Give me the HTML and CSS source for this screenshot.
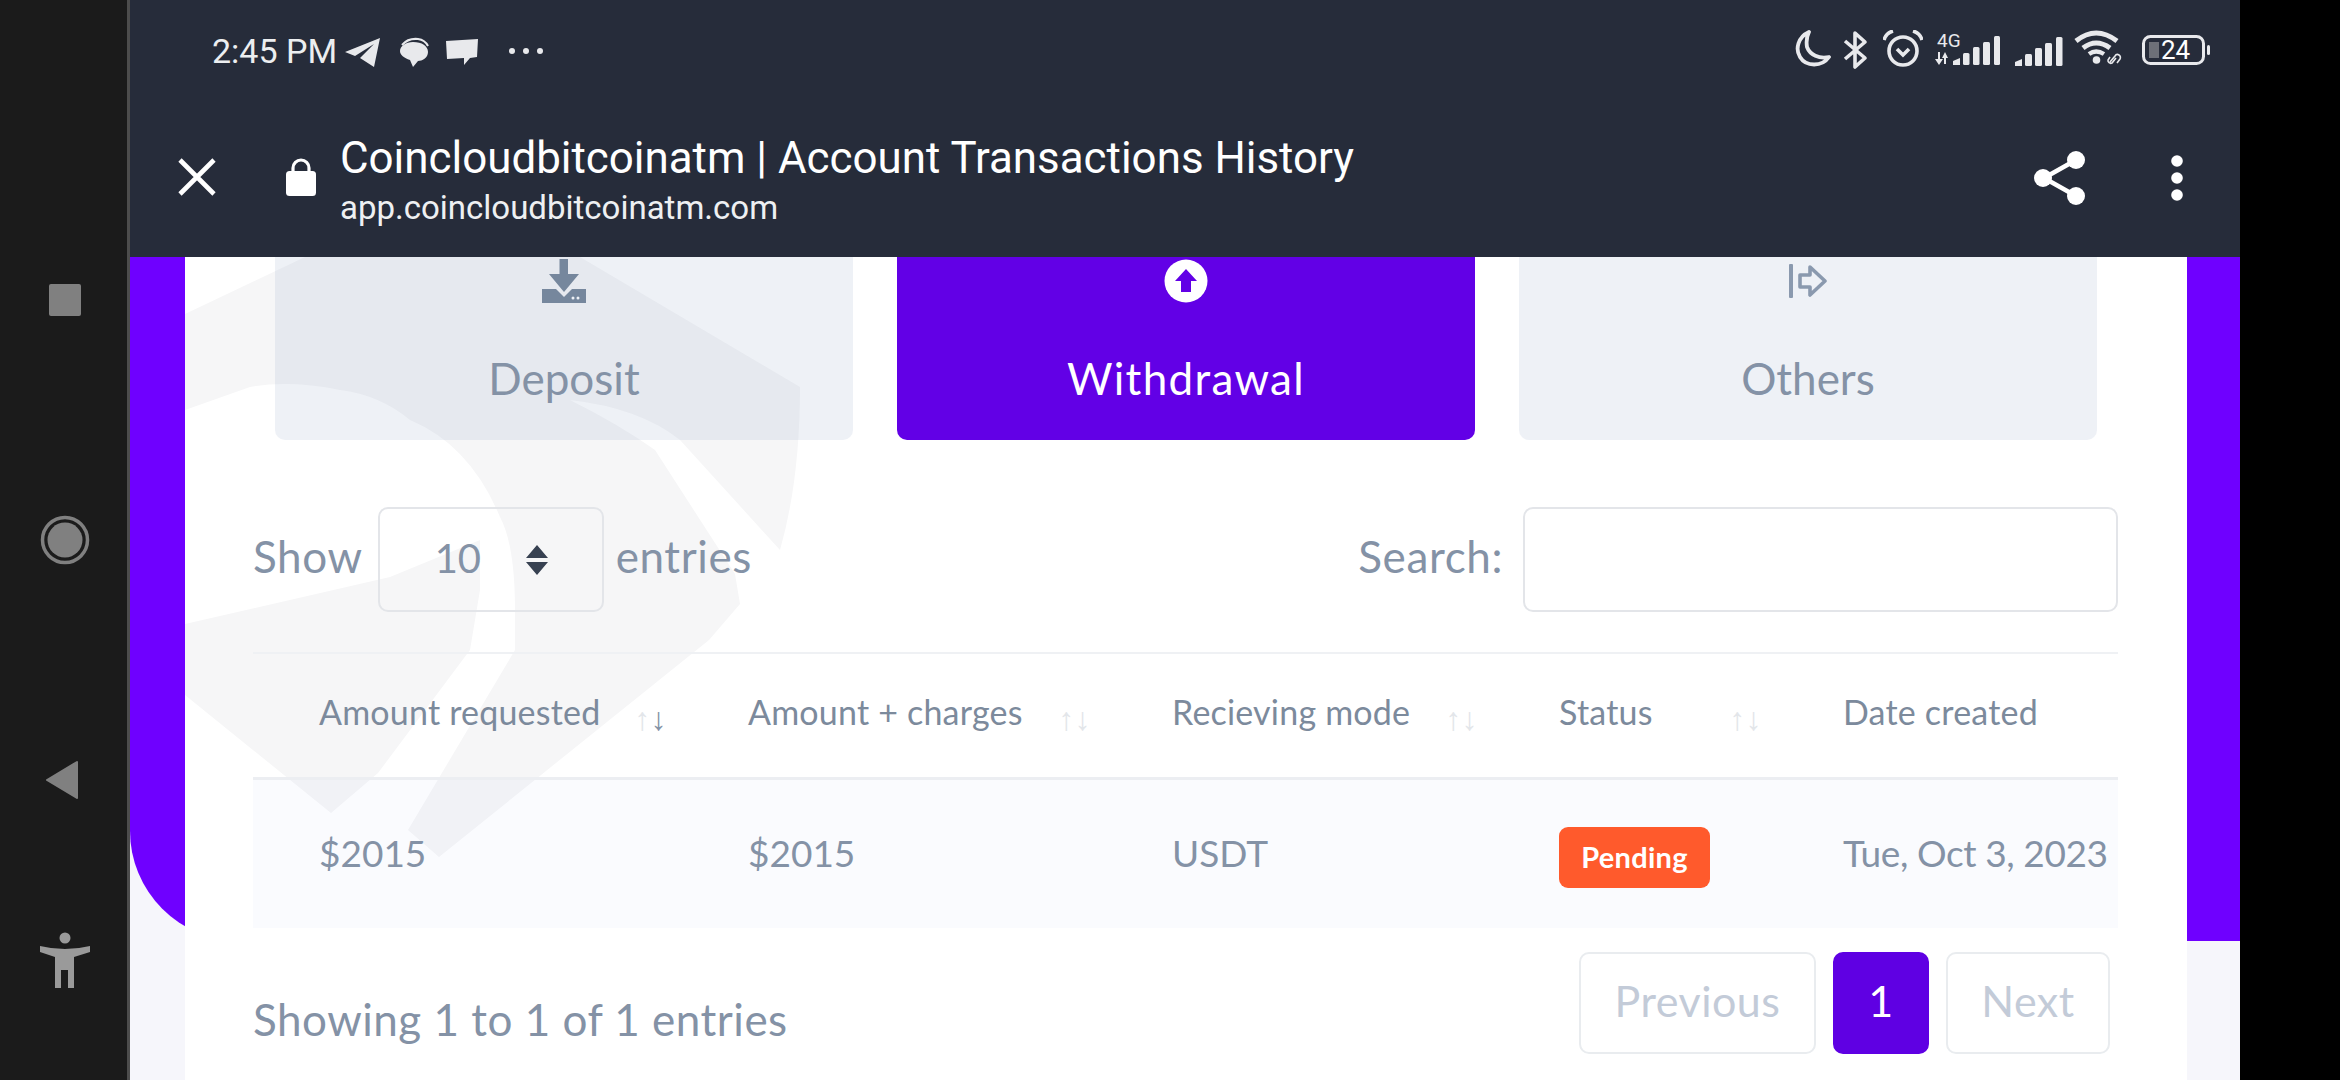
FILE: index.html
```html
<!DOCTYPE html>
<html lang="en">
<head>
  <meta charset="UTF-8">
  <title>Coincloudbitcoinatm | Account Transactions History</title>
  <link rel="stylesheet" href="styles.css">
</head>
<body>
  <!-- side navigation of the phone -->
  <nav class="sys-nav">
    <div class="nav-stop"></div>
    <svg width="50" height="50" viewBox="0 0 50 50"><circle cx="25" cy="25" r="22.5" fill="none" stroke="#808080" stroke-width="3.5"/><circle cx="25" cy="25" r="17.5" fill="#808080"/></svg>
    <svg class="nav-back" width="34" height="38" viewBox="0 0 34 38"><path d="M32 1 L2 19 L32 37 Z" fill="#808080" stroke="#808080" stroke-width="2" stroke-linejoin="round"/></svg>
    <svg width="50" height="56" viewBox="0 0 50 56"><circle cx="25" cy="6" r="5.5" fill="#9a9a9a"/><path d="M0 14 Q12 17 25 17 Q38 17 50 14 L50 20 L34 25 L34 56 L28 56 L28 38 L21 38 L21 56 L15 56 L15 25 L0 20 Z" fill="#9a9a9a"/></svg>
  </nav>

  <div class="screen">
    <header class="app-bar">
      <div class="status-bar">
        <span class="clock">2:45 PM</span>
        <svg class="st-plane" width="36" height="30" viewBox="0 0 36 30"><path d="M35 1 L0 15 L10 19 L29 7 L15 21 L29 30 Z" fill="#e8e9ec"/></svg>
        <svg class="st-chat" width="32" height="30" viewBox="0 0 32 30"><path d="M4 8 Q10 1 20 2 Q27 3 30 9" fill="none" stroke="#e8e9ec" stroke-width="2"/><path d="M15 5 C24 5 30 9 30 15 C30 21 24 24 20 24 L15 30 L12 23 C6 21 2 18 2 14 C2 9 8 5 15 5 Z" fill="#e8e9ec"/></svg>
        <svg class="st-msg" width="32" height="26" viewBox="0 0 32 26"><path d="M0 2 L32 0 L31 18 L24 19 L18 26 L18 19 L1 20 Z" fill="#e8e9ec"/></svg>
        <svg class="st-more" width="36" height="8" viewBox="0 0 36 8"><circle cx="4" cy="4" r="3" fill="#e8e9ec"/><circle cx="18" cy="4" r="3" fill="#e8e9ec"/><circle cx="32" cy="4" r="3" fill="#e8e9ec"/></svg>

        <div class="status-right">
          <svg class="st-moon" width="37" height="37" viewBox="0 0 37 37"><path d="M15 2 C4 7 1 19 6 27 C12 37 28 37 35 27 C25 29 16 25 13 17 C12 11 13 6 15 2 Z" fill="none" stroke="#e8e9ec" stroke-width="3.8" stroke-linejoin="round"/></svg>
          <svg width="26" height="40" viewBox="0 0 26 40"><path d="M3 11 L23 28 L13 37 L13 3 L23 12 L3 29" fill="none" stroke="#e8e9ec" stroke-width="3.6" stroke-linejoin="round"/></svg>
          <svg class="st-alarm" width="40" height="38" viewBox="0 0 40 38"><circle cx="20" cy="21" r="14" fill="none" stroke="#e8e9ec" stroke-width="3.6"/><path d="M14 19 L20 25 L26 19" fill="none" stroke="#e8e9ec" stroke-width="3.6"/><path d="M1 10 Q3 3 10 1 M39 10 Q37 3 30 1" fill="none" stroke="#e8e9ec" stroke-width="3.6"/></svg>
          <svg class="st-sig" width="68" height="36" viewBox="0 -4 68 36"><text class="st-4g" x="3" y="13">4G</text><path d="M1 25 L4 25 L4 18 L6 18 L6 25 L9 25 L5 31 Z M8 24 L11 18 L14 24 L12 24 L12 30 L10 30 L10 24 Z" fill="#e8e9ec"/><path d="M19 31 L19 27 L26 24 L26 31 Z" fill="#e8e9ec"/><rect x="29" y="19" width="6.5" height="12" rx="1.5" fill="#e8e9ec"/><rect x="39" y="13" width="6.5" height="18" rx="1.5" fill="#e8e9ec"/><rect x="49" y="8" width="7" height="23" rx="1.5" fill="#e8e9ec"/><rect x="60" y="2" width="6" height="29" rx="1.5" fill="#e8e9ec"/></svg>
          <svg class="st-sig2" width="48" height="30" viewBox="0 0 48 30"><path d="M0 30 L0 26 L7 23 L7 30 Z" fill="#e8e9ec"/><rect x="10" y="18" width="7" height="12" rx="1.5" fill="#e8e9ec"/><rect x="20" y="12" width="7" height="18" rx="1.5" fill="#e8e9ec"/><rect x="30" y="7" width="7" height="23" rx="1.5" fill="#e8e9ec"/><rect x="41" y="1" width="6.5" height="29" rx="1.5" fill="#e8e9ec"/></svg>
          <svg class="st-wifi" width="50" height="36" viewBox="0 0 50 36"><path d="M2 11 Q22 -5 43 11" fill="none" stroke="#e8e9ec" stroke-width="5"/><path d="M9 18 Q22 8 36 18" fill="none" stroke="#e8e9ec" stroke-width="5"/><path d="M15 24 Q22 19 30 24" fill="none" stroke="#e8e9ec" stroke-width="4.4"/><circle cx="22.5" cy="30" r="3.8" fill="#e8e9ec"/><path d="M36 32 L41 26 A2.8 2.8 0 0 1 46 29 L43 33 M42 28 L38 33 A2.8 2.8 0 0 1 34 30 L36 27" fill="none" stroke="#e8e9ec" stroke-width="1.6"/></svg>
          <svg class="st-batt" width="68" height="30" viewBox="0 0 68 30"><rect x="1.5" y="1.5" width="60" height="27" rx="7" fill="none" stroke="#e8e9ec" stroke-width="3"/><rect x="7" y="7" width="10" height="16" fill="#6d7078"/><text class="st-level" x="19" y="24">24</text><rect x="65" y="10" width="3" height="10" rx="1.5" fill="#e8e9ec"/></svg>
        </div>
      </div>

      <div class="title-bar">
        <svg class="tb-close" width="40" height="40" viewBox="0 0 40 40"><path d="M3 3 L37 37 M37 3 L3 37" stroke="#fff" stroke-width="4.6"/></svg>
        <svg class="tb-lock" width="30" height="38" viewBox="0 0 30 38"><path d="M7 15 V10 A8 8 0 0 1 23 10 V15" fill="none" stroke="#fff" stroke-width="3.2"/><rect x="0" y="13" width="30" height="25" rx="3.5" fill="#fff"/></svg>
        <div class="tb-text">
          <div class="tb-title">Coincloudbitcoinatm | Account Transactions History</div>
          <div class="tb-url">app.coincloudbitcoinatm.com</div>
        </div>
        <svg class="tb-share" width="52" height="56" viewBox="0 0 52 56"><path d="M42 10 L10 28 L42 46" fill="none" stroke="#fff" stroke-width="4.6"/><circle cx="42" cy="10" r="9" fill="#fff"/><circle cx="9" cy="28" r="9" fill="#fff"/><circle cx="42" cy="46" r="9" fill="#fff"/></svg>
        <svg class="tb-menu" width="14" height="46" viewBox="0 0 14 46"><circle cx="7" cy="6" r="5.8" fill="#fff"/><circle cx="7" cy="23" r="5.8" fill="#fff"/><circle cx="7" cy="40" r="5.8" fill="#fff"/></svg>
      </div>
    </header>

    <main class="page">
      <div class="purple-back"></div>

      <section class="card">
        <!-- faint logo behind the card content -->
        <svg class="watermark" width="2002" height="823" viewBox="185 257 2002 823">
          <path d="M185 314 L305 257 L580 257 L800 387 Q800 480 780 550 L680 440 Q640 408 570 400 Q620 425 655 450 L735 574 L740 604 L709 640 L439 857 L408 830 L515 650 L515 610 Q515 545 500 517 Q470 445 410 420 Q380 395 340 390 Q290 380 250 387 L185 410 Z" fill="#f6f6f7"/>
          <path d="M185 624 L390 577 L480 540 L480 590 L470 650 L378 773 L331 813 L185 695 Z" fill="#f6f6f7"/>
        </svg>

        <div class="card-body">
          <div class="tabs">
            <div class="tab">
              <span class="tab-icon">
                <svg width="44" height="44" viewBox="0 0 44 44"><path d="M0 30 H14 L22 38 L30 30 H44 V44 H0 Z" fill="#76879d"/><path d="M17.5 0 H26 V15 H37 L22 33 L7 15 H17.5 Z" fill="#76879d"/><circle cx="31" cy="39" r="1.5" fill="#eef1f6"/><circle cx="36" cy="39" r="1.5" fill="#eef1f6"/></svg>
              </span>
              <span class="tab-label">Deposit</span>
            </div>
            <div class="tab active">
              <span class="tab-icon">
                <svg width="44" height="44" viewBox="0 0 44 44"><circle cx="22" cy="22" r="21.5" fill="#fff"/><path d="M22 10 L33 22 H27 V33 H17 V22 H11 Z" fill="#6200e6"/></svg>
              </span>
              <span class="tab-label">Withdrawal</span>
            </div>
            <div class="tab">
              <span class="tab-icon">
                <svg width="38" height="34" viewBox="0 0 38 34"><rect x="0" y="0" width="4" height="34" rx="1" fill="#8a99ae"/><path d="M11 11 H21 V3 L36 17 L21 31 V23 H11 Z" fill="none" stroke="#8a99ae" stroke-width="3.6" stroke-linejoin="round"/></svg>
              </span>
              <span class="tab-label">Others</span>
            </div>
          </div>

          <div class="table-wrap">
            <div class="filters">
              <div class="length">
                <span class="muted">Show</span>
                <div class="select-box">
                  <span class="select-val">10</span>
                  <svg width="22" height="30" viewBox="0 0 22 30"><path d="M11 0 L22 13 H0 Z M0 17 H22 L11 30 Z" fill="#374151"/></svg>
                </div>
                <span class="muted">entries</span>
              </div>
              <div class="search">
                <span class="muted">Search:</span>
                <div class="search-box"></div>
              </div>
            </div>

            <table class="tx-table">
              <colgroup>
                <col class="col-a"><col class="col-b"><col class="col-c"><col class="col-d"><col class="col-e">
              </colgroup>
              <thead>
                <tr>
                  <th><div class="th-in">Amount requested <span class="sort sorted"><i>↑</i><i>↓</i></span></div></th>
                  <th><div class="th-in">Amount + charges <span class="sort"><i>↑</i><i>↓</i></span></div></th>
                  <th><div class="th-in">Recieving mode <span class="sort"><i>↑</i><i>↓</i></span></div></th>
                  <th><div class="th-in">Status <span class="sort"><i>↑</i><i>↓</i></span></div></th>
                  <th><div class="th-in">Date created</div></th>
                </tr>
              </thead>
              <tbody>
                <tr>
                  <td>$2015</td>
                  <td>$2015</td>
                  <td>USDT</td>
                  <td class="status-cell"><span class="badge">Pending</span></td>
                  <td class="date">Tue, Oct 3, 2023</td>
                </tr>
              </tbody>
            </table>

            <div class="table-foot">
              <div class="info">Showing 1 to 1 of 1 entries</div>
              <div class="pager">
                <span class="page-btn prev">Previous</span>
                <span class="page-btn current">1</span>
                <span class="page-btn next">Next</span>
              </div>
            </div>
          </div>
        </div>
      </section>
    </main>
  </div>

  <div class="sys-edge"></div>
</body>
</html>
```

FILE: styles.css
```css
* {
  box-sizing: border-box;
}
html, body {
  margin: 0;
  height: 1080px;
  overflow: hidden;
}
body {
  display: flex;
  width: 2340px;
  background: #000;
  font-family: Lato, "Noto Sans", sans-serif;
  color: #8492a6;
}

/* phone navigation */
.sys-nav {
  width: 130px;
  height: 1080px;
  background: #1b1b1b;
  border-right: 3px solid #4d4d4d;
  padding: 180px 0 0 2px;
  display: grid;
  grid-template-rows: 240px 240px 240px 120px;
  place-items: center;
}
.nav-stop {
  width: 32px;
  height: 32px;
  border-radius: 2px;
  background: #808080;
}
.nav-back {
  margin-right: 6px;
}
.sys-edge {
  width: 100px;
  background: #000;
}

.screen {
  width: 2110px;
  height: 1080px;
  display: flex;
  flex-direction: column;
  background: #f6f6fb;
}

/* browser header */
.app-bar {
  height: 257px;
  flex: none;
  background: #262c3a;
  font-family: Roboto, sans-serif;
  color: #fff;
}
.status-bar {
  height: 100px;
  padding: 30px 30px 0 82px;
  display: flex;
  align-items: flex-start;
}
.clock {
  font-size: 34px;
  line-height: 42px;
  color: #eceef0;
  width: 133px;
}
.st-plane {
  margin-top: 7px;
}
.st-chat {
  margin: 7px 0 0 17px;
}
.st-msg {
  margin: 9px 0 0 16px;
}
.st-more {
  margin: 17px 0 0 30px;
}
.status-right {
  margin-left: auto;
  display: flex;
  align-items: flex-start;
  gap: 13px;
}
.st-4g {
  font-family: Roboto, sans-serif;
  font-size: 19px;
  fill: #e8e9ec;
}
.st-level {
  font-family: Roboto, sans-serif;
  font-size: 26px;
  fill: #fff;
}
.st-moon {
  margin-right: -2px;
}
.st-alarm {
  margin-left: 2px;
  margin-right: -2px;
}
.st-sig2 {
  margin-top: 6px;
}
.st-wifi {
  margin-left: -2px;
}
.st-batt {
  margin: 5px 0 0 5px;
}
.title-bar {
  height: 157px;
  padding: 0 0 0 47px;
  display: flex;
  align-items: center;
}
.tb-close {
  flex: none;
  margin-bottom: 3px;
}
.tb-lock {
  flex: none;
  margin: 0 0 4px 69px;
}
.tb-text {
  margin: 2px 0 0 24px;
  flex: 1;
}
.tb-title {
  font-size: 43.9px;
  line-height: 56px;
  white-space: nowrap;
}
.tb-url {
  font-size: 33px;
  line-height: 42px;
  margin-top: 1px;
  color: #eef0f2;
  white-space: nowrap;
}
.tb-share {
  flex: none;
  margin-bottom: 2px;
}
.tb-menu {
  flex: none;
  margin: 0 56px 2px 84px;
}

/* page under the header */
.page {
  flex: 1;
  display: grid;
  grid-template-columns: 1fr;
  overflow: hidden;
}
.purple-back {
  grid-area: 1 / 1;
  height: 684px;
  background: #6f00ff;
  border-bottom-left-radius: 110px;
}
.card {
  grid-area: 1 / 1;
  margin: 0 53px 0 55px;
  background: #fff;
  position: relative;
  overflow: hidden;
}
.watermark {
  position: absolute;
  left: 0;
  top: 0;
}
.card-body {
  position: relative;
}

.tabs {
  padding: 0 90px;
  display: grid;
  grid-template-columns: repeat(3, 1fr);
  gap: 44px;
}
.tab {
  height: 183px;
  padding-top: 2px;
  border-radius: 0 0 10px 10px;
  background: rgba(170, 185, 210, 0.2);
  display: flex;
  flex-direction: column;
  align-items: center;
}
.tab-icon {
  height: 44px;
  display: flex;
  align-items: center;
}
.tab-label {
  margin-top: 50px;
  font-size: 44px;
  line-height: 50px;
  color: #8492a6;
}
.tab.active {
  background: #6200e6;
}
.tab.active .tab-label {
  color: #fff;
  letter-spacing: 1.3px;
}

.table-wrap {
  padding: 67px 69px 0 68px;
}
.filters {
  display: flex;
  justify-content: space-between;
  align-items: center;
  height: 105px;
  font-size: 44px;
  letter-spacing: 0.6px;
}
.muted {
  margin-top: -8px;
}
.length {
  display: flex;
  align-items: center;
}
.select-box {
  width: 226px;
  height: 105px;
  margin: 0 12px 0 15px;
  padding: 0 0 0 55px;
  border: 2px solid #e3e5e9;
  border-radius: 10px;
  display: flex;
  align-items: center;
  gap: 45px;
}
.select-val {
  margin-top: -4px;
  font-size: 40px;
  letter-spacing: 0;
}
.search {
  display: flex;
  align-items: center;
}
.search-box {
  width: 595px;
  height: 105px;
  margin-left: 20px;
  border: 2px solid #e3e5e9;
  border-radius: 10px;
}

.tx-table {
  width: 100%;
  margin-top: 40px;
  table-layout: fixed;
  border-collapse: collapse;
}
.col-a { width: 429px; }
.col-b { width: 424px; }
.col-c { width: 387px; }
.col-d { width: 284px; }
.col-e { width: 341px; }
.tx-table thead tr {
  height: 125px;
  border-top: 2px solid #eff1f4;
  border-bottom: 3px solid #eceef2;
}
.tx-table th {
  padding: 0 0 8px 66px;
  font-size: 34px;
  font-weight: 400;
  letter-spacing: 0.2px;
  text-align: left;
  color: #7c8a9c;
}
.th-in {
  display: flex;
  justify-content: space-between;
  align-items: center;
  padding-right: 15px;
  white-space: nowrap;
}
.sort {
  margin-top: 16px;
  font-family: "Liberation Sans", sans-serif;
  font-size: 32px;
  color: #e3e6ea;
}
.sort i {
  font-style: normal;
}
.sort.sorted i:last-child {
  color: #8492a6;
}
.tx-table tbody tr {
  height: 150px;
  background: rgba(140, 160, 230, 0.04);
}
.tx-table td {
  padding: 0 0 2px 66px;
  font-size: 37px;
  white-space: nowrap;
}
.tx-table td.status-cell {
  padding: 0 0 0 66px;
}
.tx-table td.date {
  letter-spacing: -0.4px;
}
.badge {
  display: inline-block;
  width: 151px;
  height: 61px;
  margin-top: 8px;
  border-radius: 9px;
  background: #ff5a2c;
  color: #fff;
  font-size: 29px;
  font-weight: 700;
  letter-spacing: 0.3px;
  line-height: 60px;
  text-align: center;
}

.table-foot {
  display: flex;
  justify-content: space-between;
  align-items: flex-start;
  padding: 24px 8px 0 0;
}
.info {
  margin-top: 40px;
  font-size: 44px;
  letter-spacing: 0.5px;
  line-height: 54px;
}
.pager {
  display: flex;
  gap: 17px;
}
.page-btn {
  height: 102px;
  border: 2px solid #e9ecef;
  border-radius: 10px;
  font-size: 43px;
  letter-spacing: 0.5px;
  line-height: 94px;
  text-align: center;
  color: #c3cbd8;
}
.page-btn.prev { width: 237px; }
.page-btn.next { width: 164px; }
.page-btn.current {
  width: 96px;
  border-color: #5f00e3;
  background: #5f00e3;
  color: #fff;
}
```
